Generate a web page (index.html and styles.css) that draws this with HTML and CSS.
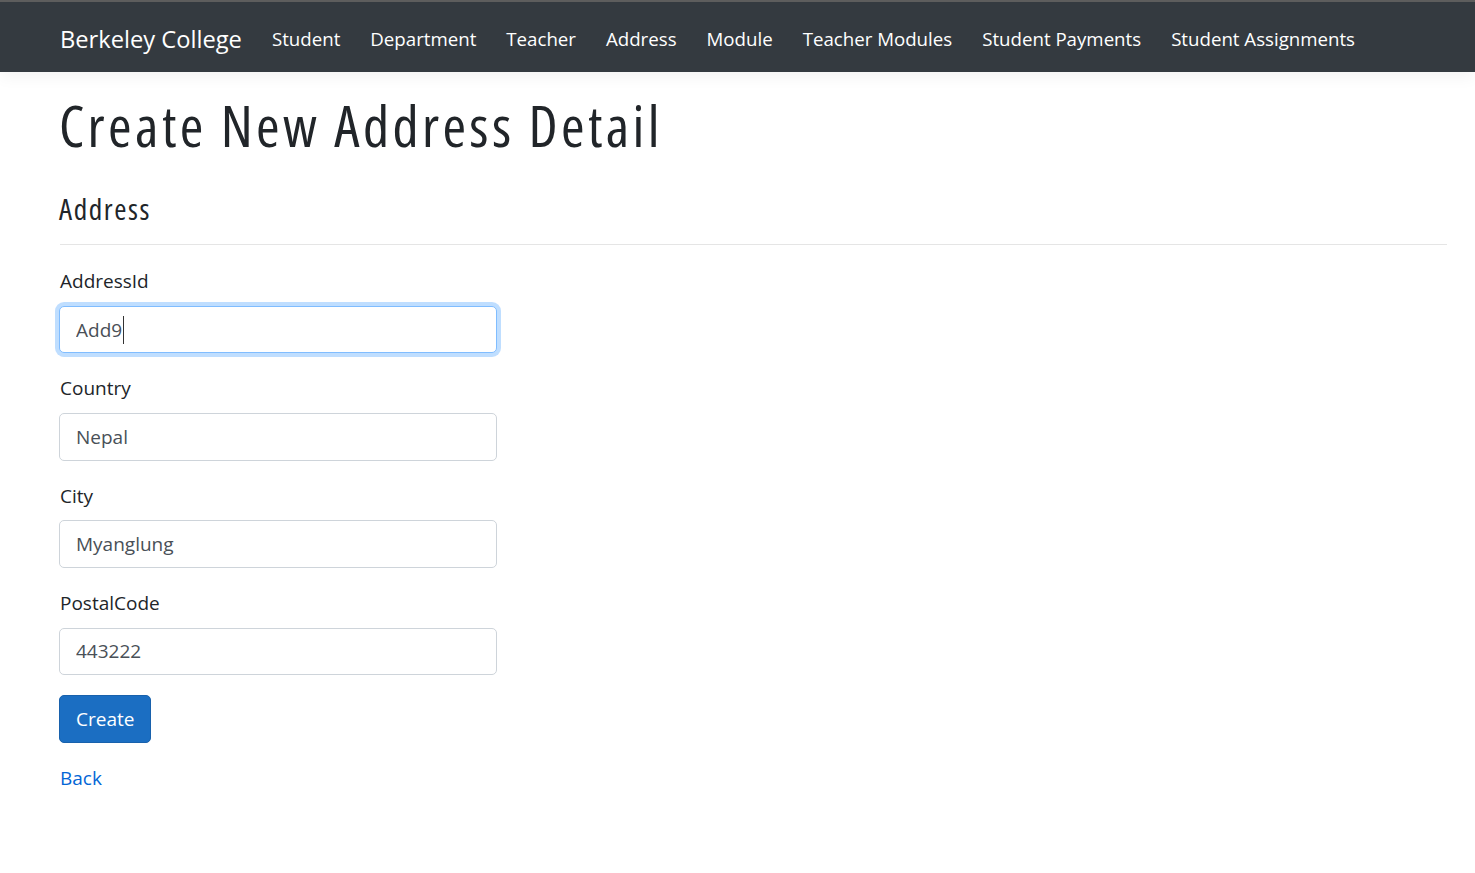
FILE: index.html
```html
<!DOCTYPE html>
<html lang="en">
<head>
<meta charset="utf-8">
<title>Create - Berkeley College</title>
<link rel="stylesheet" href="styles.css">
</head>
<body>
<header class="navbar">
  <a class="brand" href="#">Berkeley College</a>
  <nav class="nav">
    <a class="nav-link" href="#">Student</a>
    <a class="nav-link" href="#">Department</a>
    <a class="nav-link" href="#">Teacher</a>
    <a class="nav-link" href="#">Address</a>
    <a class="nav-link" href="#">Module</a>
    <a class="nav-link" href="#">Teacher Modules</a>
    <a class="nav-link" href="#">Student Payments</a>
    <a class="nav-link" href="#">Student Assignments</a>
  </nav>
</header>
<main class="container">
  <h1 class="title">Create New Address Detail</h1>
  <h4 class="subtitle">Address</h4>
  <hr class="rule">
  <form class="form">
    <div class="form-group">
      <label class="label" for="aid">AddressId</label>
      <div class="field">
        <input class="input input-focus" id="aid" type="text" value="Add9">
        <span class="caret"></span>
      </div>
    </div>
    <div class="form-group">
      <label class="label" for="country">Country</label>
      <input class="input" id="country" type="text" value="Nepal">
    </div>
    <div class="form-group">
      <label class="label" for="city">City</label>
      <input class="input" id="city" type="text" value="Myanglung">
    </div>
    <div class="form-group">
      <label class="label" for="postal">PostalCode</label>
      <input class="input" id="postal" type="text" value="443222">
    </div>
    <div class="form-group">
      <button class="btn" type="button">Create</button>
    </div>
  </form>
  <div class="back"><a class="link" href="#">Back</a></div>
</main>
</body>
</html>
```

FILE: styles.css
```css
* { box-sizing: border-box; }

html, body {
  margin: 0;
  padding: 0;
  background: #fff;
}

body {
  font-family: "Segoe UI", "Open Sans", "Noto Sans", sans-serif;
  font-size: 19px;
  line-height: 30px;
  color: #212529;
}

.navbar {
  display: flex;
  align-items: center;
  height: 72px;
  padding: 4px 20px 0 60px;
  background: #343a40;
  border-top: 2px solid #5d5d5d;
  box-shadow: 0 5px 15px rgba(0, 0, 0, 0.05);
  position: relative;
}

.brand {
  color: #fff;
  text-decoration: none;
  font-size: 23.7px;
  line-height: 37px;
  margin-right: 30px;
  white-space: nowrap;
}

.nav {
  display: flex;
  gap: 30px;
}

.nav-link {
  color: #fff;
  text-decoration: none;
  font-size: 18.68px;
  white-space: nowrap;
}

.container {
  padding: 0 28px 60px 59px;
}

.title {
  margin: 23px 0 0;
  font-size: 57px;
  line-height: 60px;
  font-weight: 500;
  font-stretch: 75%;
  letter-spacing: 3.4px;
}

.subtitle {
  margin: 36px 0 0;
  font-size: 29.5px;
  line-height: 36px;
  font-weight: 500;
  font-stretch: 75%;
  letter-spacing: 1.6px;
}

.rule {
  margin: 17px 0 0 1px;
  border: 0;
  border-top: 1px solid rgba(0, 0, 0, 0.1);
}

.form {
  margin-top: 21px;
  width: 438px;
}

.form-group {
  margin-bottom: 20px;
}

.label {
  display: block;
  margin: 0 0 9.75px 1px;
  line-height: 30px;
}

.field {
  position: relative;
}

.input {
  display: block;
  width: 100%;
  height: 47.5px;
  padding: 7px 15px 7px 16px;
  font-family: inherit;
  font-size: 19px;
  line-height: 30px;
  color: #495057;
  background: #fff;
  border: 1px solid #ced4da;
  border-radius: 5px;
  outline: none;
}

.input-focus {
  border-color: #80bdff;
  box-shadow: 0 0 0 4px rgba(0, 123, 255, 0.25);
}

.caret {
  position: absolute;
  left: 64px;
  top: 10px;
  width: 1px;
  height: 28px;
  background: #333;
}

.btn {
  display: inline-block;
  height: 47.5px;
  padding: 7px 16px;
  font-family: inherit;
  font-size: 19px;
  line-height: 30px;
  color: #fff;
  background: #1b6ec2;
  border: 1px solid #1861ac;
  border-radius: 5px;
}

.back {
  line-height: 30px;
  margin-top: 1px;
}

.link {
  color: #0366d6;
  text-decoration: none;
  margin-left: 1px;
}
```
